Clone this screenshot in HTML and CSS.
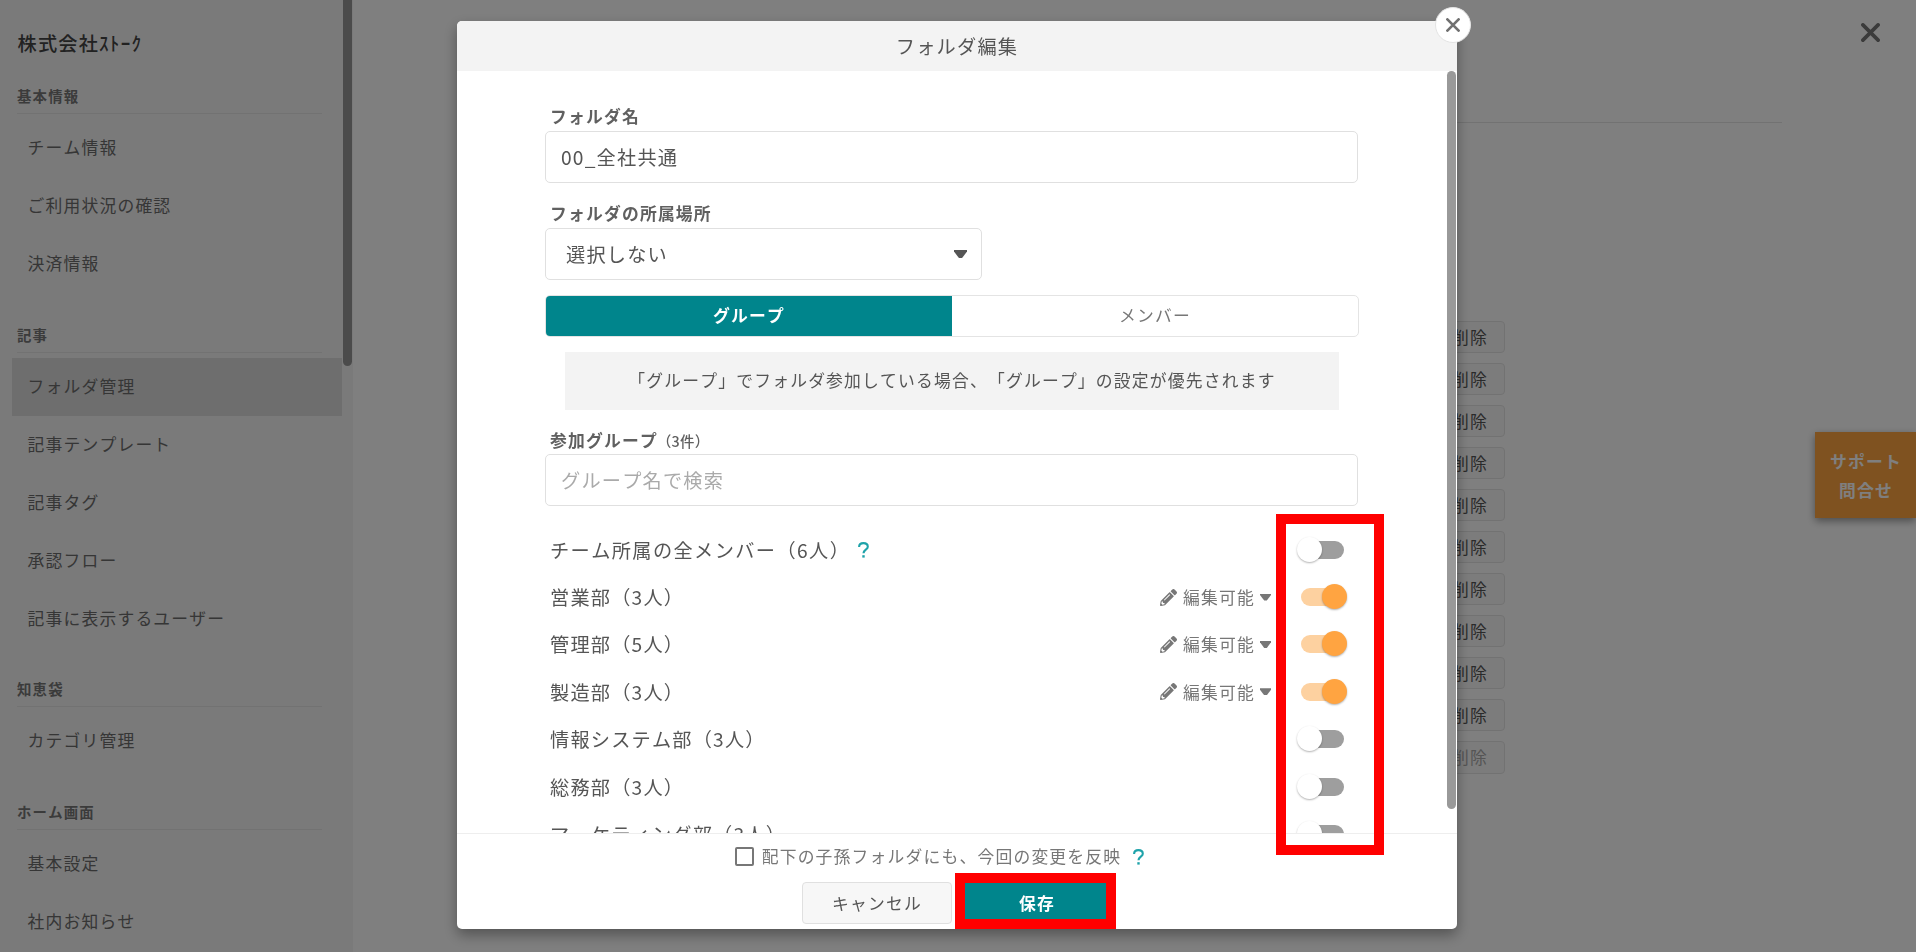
FILE: index.html
```html
<!DOCTYPE html>
<html lang="ja">
<head>
    <meta charset="UTF-8">
    <meta name="viewport" content="width=device-width, initial-scale=1.0">
    <title>フォルダ編集</title>
    <link rel="stylesheet" href="styles.css">
</head>
<body>
    <svg class="sprite" aria-hidden="true">
        <symbol id="icon-close" viewBox="0 0 14 14">
            <path d="M1.4 1.4 L12.6 12.6 M12.6 1.4 L1.4 12.6" fill="none" stroke="currentColor" stroke-width="2.7" stroke-linecap="round"/>
        </symbol>
        <symbol id="icon-help" viewBox="0 0 11 16">
            <path d="M1.1 4.9 C1.1 2.5 2.8 1.1 5.4 1.1 C8 1.1 9.8 2.5 9.8 4.7 C9.8 7.6 5.5 7.7 5.5 11.2" fill="none" stroke="currentColor" stroke-width="2.1"/>
            <rect x="4.3" y="13.2" width="2.4" height="2.4" fill="currentColor"/>
        </symbol>
        <symbol id="icon-pencil" viewBox="0 0 512 512">
            <path fill="currentColor" d="M498 142l-46 46c-5 5-13 5-17 0L324 77c-5-5-5-12 0-17l46-46c19-19 49-19 68 0l60 60c19 19 19 49 0 68zm-214-42L22 362 0 484c-3 16 12 30 28 28l122-22 262-262c5-5 5-13 0-17L301 100c-4-5-12-5-17 0zM124 340c-5-6-5-14 0-20l154-154c6-5 14-5 20 0s5 14 0 20L144 340c-6 5-14 5-20 0zm-36 84h48v36l-64 12-32-32 12-64h36v48z"/>
        </symbol>
    </svg>

    <div class="page">
        <nav class="sidebar">
            <div class="team-name">株式会社ｽﾄｰｸ</div>
            <section class="menu-group">
                <h2>基本情報</h2>
                <a class="menu-item">チーム情報</a>
                <a class="menu-item">ご利用状況の確認</a>
                <a class="menu-item">決済情報</a>
            </section>
            <section class="menu-group">
                <h2>記事</h2>
                <a class="menu-item active">フォルダ管理</a>
                <a class="menu-item">記事テンプレート</a>
                <a class="menu-item">記事タグ</a>
                <a class="menu-item">承認フロー</a>
                <a class="menu-item">記事に表示するユーザー</a>
            </section>
            <section class="menu-group">
                <h2>知恵袋</h2>
                <a class="menu-item">カテゴリ管理</a>
            </section>
            <section class="menu-group">
                <h2>ホーム画面</h2>
                <a class="menu-item">基本設定</a>
                <a class="menu-item">社内お知らせ</a>
            </section>
            <div class="sidebar-thumb"></div>
        </nav>
        <main class="content">
            <div class="content-head"></div>
            <div class="folder-actions">
                <button class="delete">削除</button>
                <button class="delete">削除</button>
                <button class="delete">削除</button>
                <button class="delete">削除</button>
                <button class="delete">削除</button>
                <button class="delete">削除</button>
                <button class="delete">削除</button>
                <button class="delete">削除</button>
                <button class="delete">削除</button>
                <button class="delete">削除</button>
                <button class="delete" disabled>削除</button>
            </div>
            <svg class="page-close"><use href="#icon-close"/></svg>
            <div class="support">サポート<br>問合せ</div>
        </main>
    </div>

    <div class="overlay">
        <div class="modal">
            <button class="modal-close"><svg><use href="#icon-close"/></svg></button>
            <header class="modal-head">フォルダ編集</header>

            <div class="modal-body">
                <div class="form">
                    <div class="label">フォルダ名</div>
                    <div class="input">00_全社共通</div>

                    <div class="label">フォルダの所属場所</div>
                    <div class="input select">選択しない<span class="caret"></span></div>

                    <div class="tabs">
                        <div class="tab selected">グループ</div>
                        <div class="tab">メンバー</div>
                    </div>

                    <div class="notice">「グループ」でフォルダ参加している場合、「グループ」の設定が優先されます</div>

                    <div class="label label-group">参加グループ<small>（3件）</small></div>
                    <div class="input placeholder">グループ名で検索</div>

                    <div class="group-list">
                        <div class="group">
                            <span class="name all-members">チーム所属の全メンバー（6人）</span>
                            <svg class="help"><use href="#icon-help"/></svg>
                            <span class="toggle"></span>
                        </div>
                        <div class="group">
                            <span class="name">営業部（3人）</span>
                            <span class="permission"><svg><use href="#icon-pencil"/></svg>編集可能<span class="caret"></span></span>
                            <span class="toggle on"></span>
                        </div>
                        <div class="group">
                            <span class="name">管理部（5人）</span>
                            <span class="permission"><svg><use href="#icon-pencil"/></svg>編集可能<span class="caret"></span></span>
                            <span class="toggle on"></span>
                        </div>
                        <div class="group">
                            <span class="name">製造部（3人）</span>
                            <span class="permission"><svg><use href="#icon-pencil"/></svg>編集可能<span class="caret"></span></span>
                            <span class="toggle on"></span>
                        </div>
                        <div class="group">
                            <span class="name">情報システム部（3人）</span>
                            <span class="toggle"></span>
                        </div>
                        <div class="group">
                            <span class="name">総務部（3人）</span>
                            <span class="toggle"></span>
                        </div>
                        <div class="group">
                            <span class="name">マーケティング部（3人）</span>
                            <span class="toggle"></span>
                        </div>
                    </div>
                </div>
                <div class="modal-thumb"></div>
            </div>

            <footer class="modal-foot">
                <div class="apply">
                    <span class="checkbox"></span>
                    <span>配下の子孫フォルダにも、今回の変更を反映</span>
                    <svg class="help"><use href="#icon-help"/></svg>
                </div>
                <div class="buttons">
                    <button class="cancel">キャンセル</button>
                    <button class="save">保存</button>
                </div>
            </footer>

            <div class="marker marker-toggles"></div>
            <div class="marker marker-save"></div>
        </div>
    </div>
</body>
</html>
```
FILE: styles.css
```css
* {
    margin: 0;
    padding: 0;
    box-sizing: border-box;
}

body {
    height: 100vh;
    overflow: hidden;
    background: #fff;
    color: #555;
    font-family: "Noto Sans CJK JP", sans-serif;
    font-size: 16.8px;
    font-kerning: none;
    letter-spacing: 1.2px;
    text-spacing-trim: space-all;
}

button {
    font: inherit;
    font-kerning: none;
    letter-spacing: inherit;
    color: inherit;
}

.sprite {
    position: absolute;
    width: 0;
    height: 0;
}

.page {
    display: flex;
    height: 100vh;
}

/* sidebar */

.sidebar {
    position: relative;
    flex: none;
    width: 353px;
    padding: 27px 11px 0 12px;
    background: #f4f4f4;
    overflow: hidden;
}

.team-name {
    height: 32px;
    margin-left: 5.5px;
    line-height: 33px;
    font-size: 19.2px;
    font-weight: 500;
    color: #444;
}

.menu-group {
    margin-bottom: 29.5px;
}

.menu-group h2 {
    height: 30px;
    margin: 0 20px 5px 5px;
    line-height: 24px;
    border-bottom: 1px solid #e4e4e4;
    font-size: 14.4px;
    font-weight: 700;
    color: #777;
}

.team-name + .menu-group h2 {
    margin-top: 25px;
}

.menu-item {
    display: block;
    height: 58px;
    padding-left: 15.5px;
    line-height: 57px;
    color: #6c6c6c;
}

.menu-item.active {
    background: #dcdcdc;
}

.sidebar-thumb {
    position: absolute;
    top: -10px;
    right: 1px;
    width: 9px;
    height: 376px;
    border-radius: 5px;
    background: #979797;
}

/* page behind the dialog */

.content {
    position: relative;
    flex: 1;
    padding-right: 134px;
}

.content-head {
    height: 123px;
    margin: 0 0 197.5px 120px;
    border-bottom: 1px solid #e4e4e4;
}

.folder-actions {
    display: flex;
    flex-direction: column;
    align-items: flex-end;
    gap: 10px;
    padding-right: 277px;
}

.delete {
    width: 70px;
    height: 32.1px;
    line-height: 30px;
    background: #f9f9f9;
    border: 1px solid #e4e4e4;
    border-radius: 4px;
    color: #555;
}

.delete:disabled {
    color: #aaa;
}

.page-close {
    position: absolute;
    top: 23px;
    right: 36px;
    width: 19px;
    height: 19px;
    color: #777;
}

.support {
    position: absolute;
    top: 432px;
    right: 0;
    width: 101px;
    height: 86px;
    padding: 15px 0 0 1px;
    line-height: 29px;
    text-align: center;
    font-weight: 700;
    color: #fff;
    background: #ffa441;
    box-shadow: 0 3px 8px rgba(0, 0, 0, 0.4);
}

/* dialog */

.overlay {
    position: fixed;
    inset: 0;
    padding: 21px 459px 23px 457px;
    background: rgba(0, 0, 0, 0.5);
}

.modal {
    position: relative;
    display: flex;
    flex-direction: column;
    height: 908px;
    border-radius: 5px;
    background: #fff;
    box-shadow: 0 6px 14px rgba(0, 0, 0, 0.35);
}

.modal-head {
    flex: none;
    height: 50px;
    line-height: 51px;
    text-align: center;
    font-size: 19.2px;
    color: #555;
    background: #f3f3f3;
    border-radius: 5px 5px 0 0;
}

.modal-close {
    position: absolute;
    top: -14px;
    right: -14px;
    display: flex;
    align-items: center;
    justify-content: center;
    width: 36px;
    height: 36px;
    border: 1px solid #e4e4e4;
    border-radius: 50%;
    background: #fff;
    color: #707070;
}

.modal-close svg {
    width: 14px;
    height: 14px;
}

.modal-body {
    position: relative;
    flex: 1;
    min-height: 0;
    overflow: hidden;
}

.modal-thumb {
    position: absolute;
    top: 0;
    right: 1px;
    width: 9px;
    height: 738px;
    border-radius: 5px;
    background: #999;
}

.form {
    width: 813px;
    margin-left: 88px;
    padding-top: 32px;
}

.label {
    height: 28px;
    padding-left: 5px;
    line-height: 26px;
    font-weight: 700;
    color: #606060;
}

.label small {
    margin-left: -1px;
    font-size: 14.4px;
    font-weight: 500;
    letter-spacing: 0.3px;
}

.input {
    height: 52px;
    margin-bottom: 17px;
    padding-left: 15px;
    line-height: 50px;
    font-size: 19.2px;
    border: 1px solid #e0e0e0;
    border-radius: 5px;
}

.select {
    display: flex;
    align-items: center;
    justify-content: space-between;
    width: 437px;
    margin-bottom: 15px;
    padding: 0 14px 0 20px;
}

.placeholder {
    margin-bottom: 20px;
    line-height: 51px;
    color: #aaa;
}

.caret {
    width: 13px;
    height: 8px;
    background: currentColor;
    clip-path: polygon(0 0, 100% 0, 100% 20%, 62% 100%, 38% 100%, 0 20%);
}

.tabs {
    display: flex;
    height: 42px;
    margin-right: -1px;
    border: 1px solid #e4e4e4;
    border-radius: 5px;
    overflow: hidden;
}

.tab {
    flex: 1;
    line-height: 38px;
    text-align: center;
    color: #777;
}

.tab.selected {
    background: #00858c;
    color: #fff;
    font-weight: 700;
}

.notice {
    height: 58px;
    margin: 15px 19px 17px 20px;
    line-height: 57px;
    text-align: center;
    background: #f3f3f3;
}

.label-group {
    height: 27px;
}

.group {
    display: flex;
    align-items: center;
    height: 47.4px;
    padding: 0 14px 0 5px;
    font-size: 19.2px;
}

.all-members {
    margin-right: 8px;
    letter-spacing: 1.4px;
}

.help {
    width: 11px;
    height: 16px;
    margin-top: 1px;
    color: #1fa3aa;
}

.permission {
    display: flex;
    align-items: center;
    margin-left: auto;
    margin-right: 30px;
    font-size: 16.8px;
    color: #777;
}

.permission svg {
    width: 17px;
    height: 17px;
    margin-right: 6px;
}

.permission .caret {
    width: 11px;
    height: 7px;
    margin-left: 5px;
}

.toggle {
    position: relative;
    width: 43px;
    height: 18px;
    margin-left: auto;
    border-radius: 9px;
    background: #9e9e9e;
}

.permission + .toggle {
    margin-left: 0;
}

.toggle::before {
    content: '';
    position: absolute;
    top: -4px;
    left: -4px;
    width: 25px;
    height: 25px;
    border-radius: 50%;
    background: #fff;
    box-shadow: 0 1px 2px rgba(0, 0, 0, 0.3);
}

.toggle.on {
    background: #fdd1a0;
}

.toggle.on::before {
    left: 21px;
    background: #ffa441;
}

.modal-foot {
    flex: none;
    height: 96px;
    padding-top: 9px;
    border-top: 1px solid #eee;
}

.apply {
    display: flex;
    align-items: center;
    justify-content: center;
    height: 26px;
    padding-right: 35px;
    color: #777;
}

.checkbox {
    width: 19px;
    height: 19px;
    margin-right: 8px;
    border: 2px solid #777;
    border-radius: 2px;
}

.apply .help {
    margin-left: 12px;
}

.buttons {
    display: flex;
    gap: 10px;
    margin: 13px 0 0 345px;
}

.cancel,
.save {
    width: 150px;
    height: 42px;
    line-height: 38px;
    border-radius: 4px;
}

.cancel {
    border: 1px solid #e0e0e0;
    background: #f7f7f7;
}

.save {
    border: 0;
    background: #00858c;
    color: #fff;
    font-weight: 700;
}

/* red frames over the toggles and the save button */

.marker {
    position: absolute;
    border: 10px solid #f00;
}

.marker-toggles {
    top: 493px;
    left: 819px;
    width: 108px;
    height: 341px;
}

.marker-save {
    top: 852px;
    left: 498px;
    width: 161px;
    height: 56px;
}
```
